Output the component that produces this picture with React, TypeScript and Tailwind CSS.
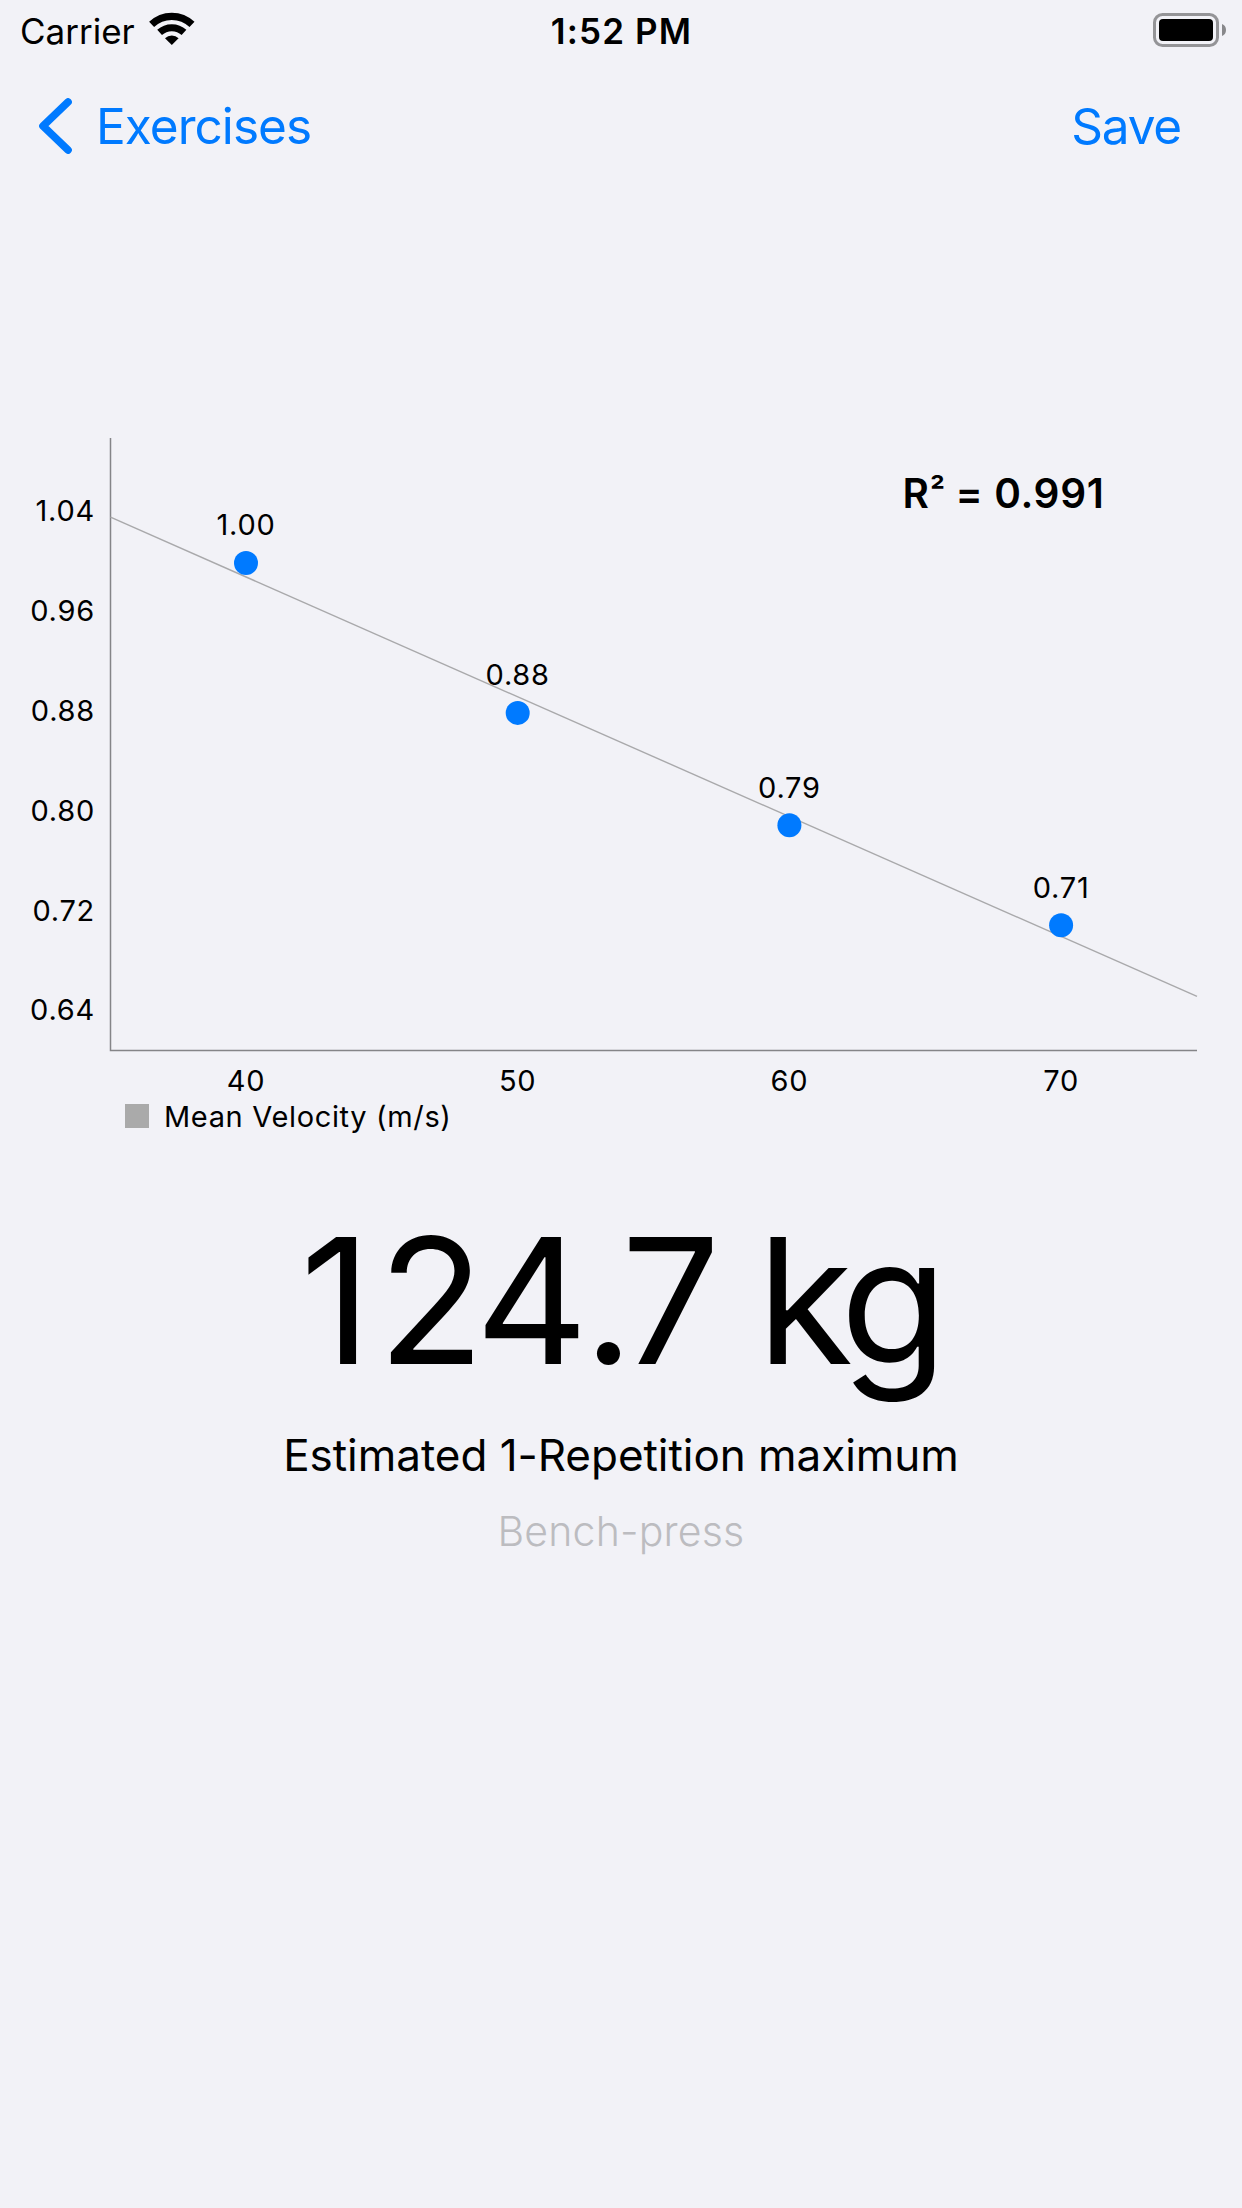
import React from "react";

type Point = {
  weight: number;
  velocity: number;
};

const points: Point[] = [
  { weight: 40, velocity: 1.0 },
  { weight: 50, velocity: 0.88 },
  { weight: 60, velocity: 0.79 },
  { weight: 70, velocity: 0.71 },
];

const yTicks = [1.04, 0.96, 0.88, 0.8, 0.72, 0.64];

const toX = (weight: number) => 246 + (weight - 40) * 27.17;
const toY = (velocity: number) => 563 + (1 - velocity) * 1249;

const WifiIcon = () => (
  <svg width="46" height="35" viewBox="0 0 46 35" fill="none">
    <path
      d="M2.6 12.4A29.2 29.2 0 0 1 43 12.4"
      stroke="black"
      strokeWidth="7.2"
    />
    <path
      d="M10.6 20.4A18 18 0 0 1 35 20.4"
      stroke="black"
      strokeWidth="7"
    />
    <path d="M22.8 33L16 26.2A9.8 9.8 0 0 1 29.6 26.2Z" fill="black" />
  </svg>
);

const BatteryIcon = () => (
  <svg width="73" height="34" viewBox="0 0 73 34" fill="none">
    <rect
      x="1.5"
      y="1.5"
      width="63"
      height="31"
      rx="8"
      stroke="#949497"
      strokeWidth="3"
    />
    <rect x="6" y="6" width="54" height="22" rx="4" fill="black" />
    <path d="M69 11C71.6 12 73 14.2 73 17C73 19.8 71.6 22 69 23Z" fill="#88888b" />
  </svg>
);

const StatusBar = () => (
  <div className="flex h-[62px] items-center text-[35px] leading-none">
    <div className="flex flex-1 items-center gap-3.5 pl-5">
      <span>Carrier</span>
      <div className="pb-[3px]">
        <WifiIcon />
      </div>
    </div>
    <span className="pr-[3px] font-semibold tracking-[1.14px]">1:52 PM</span>
    <div className="flex flex-1 justify-end pr-4 pb-0.5">
      <BatteryIcon />
    </div>
  </div>
);

const NavBar = () => (
  <div className="flex h-32 items-center justify-between pl-[39px] pr-[61px] text-[49.5px] leading-none text-[#007aff]">
    <button className="flex items-center gap-6 tracking-[-0.95px]">
      <svg width="33" height="56" viewBox="0 0 33 56" fill="none">
        <path
          d="M29 4L4 28L29 52"
          stroke="currentColor"
          strokeWidth="7.6"
          strokeLinecap="round"
          strokeLinejoin="round"
        />
      </svg>
      <span className="pt-0.5">Exercises</span>
    </button>
    <button className="pt-0.5 tracking-[-1.2px]">Save</button>
  </div>
);

const Chart = () => (
  <svg
    width="1242"
    height="950"
    viewBox="0 190 1242 950"
    className="block text-[29px] tracking-[0.75px]"
  >
    <path d="M110.5 438V1050.5H1197" fill="none" stroke="#858588" strokeWidth="1.5" />
    <path d="M110.5 517.2L1197 996.4" stroke="#a9a9ab" strokeWidth="1.4" />

    {yTicks.map((tick) => (
      <text key={tick} x="95" y={toY(tick) + 7.8} textAnchor="end">
        {tick.toFixed(2)}
      </text>
    ))}

    {points.map(({ weight, velocity }) => (
      <g key={weight}>
        <circle cx={toX(weight)} cy={toY(velocity)} r="12" fill="#007aff" />
        <text x={toX(weight)} y={toY(velocity) - 27.7} textAnchor="middle">
          {velocity.toFixed(2)}
        </text>
        <text x={toX(weight)} y="1091" textAnchor="middle">
          {weight}
        </text>
      </g>
    ))}

    <g className="text-[40.5px] font-semibold tracking-[0.65px]">
      <text x="902.5" y="508">
        R
      </text>
      <text x="930" y="502.5" className="text-[33px]">
        ²
      </text>
      <text x="955.5" y="508">
        = 0.991
      </text>
    </g>

    <rect x="125" y="1104" width="24" height="24" fill="#aaaaaa" />
    <text x="164" y="1126.5" className="tracking-[0.65px]">
      Mean Velocity (m/s)
    </text>
  </svg>
);

const App = () => {
  return (
    <div className="h-[2208px] w-[1242px] overflow-hidden bg-[#f2f2f7] font-['Inter',sans-serif] text-black">
      <StatusBar />
      <NavBar />
      <Chart />
      <div className="flex flex-col items-center pt-[60px]">
        <h1 className="pl-px text-[175px] leading-[200px] tracking-[-4.9px]">
          <span className="tracking-[6.4px]">1</span>
          <span className="tracking-[-9.4px]">2</span>
          <span className="tracking-[-4.9px]">4</span>
          <span className="tracking-[-12.4px]">.</span>7
          <span className="tracking-[-7.7px]"> </span>
          <span className="tracking-[-12.8px]">k</span>g
        </h1>
        <p className="mt-[25px] text-[44px] leading-[60px] tracking-[-0.04px]">
          Estimated 1-Repetition maximum
        </p>
        <p className="mt-4 text-[41px] font-light leading-[60px] tracking-[0.17px] text-[#bcbcc0]">
          Bench-press
        </p>
      </div>
    </div>
  );
};

export default App;
